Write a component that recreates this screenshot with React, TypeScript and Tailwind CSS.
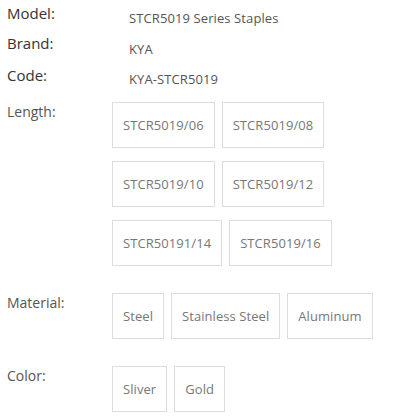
import React from 'react';

interface Spec {
  label: string;
  value: string;
  height: string;
  pad: string;
}

const specs: Spec[] = [
  { label: 'Model:', value: 'STCR5019 Series Staples', height: 'h-[30px]', pad: 'pt-[5px]' },
  { label: 'Brand:', value: 'KYA', height: 'h-[32px]', pad: 'pt-[6px]' },
  { label: 'Code:', value: 'KYA-STCR5019', height: 'h-[37px]', pad: 'pt-[4px]' },
];

interface OptionGroup {
  label: string;
  options: string[];
}

const groups: OptionGroup[] = [
  {
    label: 'Length:',
    options: ['STCR5019/06', 'STCR5019/08', 'STCR5019/10', 'STCR5019/12', 'STCR50191/14', 'STCR5019/16'],
  },
  { label: 'Material:', options: ['Steel', 'Stainless Steel', 'Aluminum'] },
  { label: 'Color:', options: ['Sliver', 'Gold'] },
];

const App: React.FC = () => {
  return (
    <div className="w-[417px] h-[420px] bg-white pl-[7px] pt-[3px] font-['Open_Sans',sans-serif] overflow-hidden">
      {specs.map((s) => (
        <div key={s.label} className={`flex items-start ${s.height}`}>
          <span className="w-[122px] shrink-0 text-[15px] leading-5 text-[#333]">{s.label}</span>
          <span className={`text-[13px] leading-5 text-[#555] tracking-[0.1px] ${s.pad}`}>{s.value}</span>
        </div>
      ))}

      <div className="flex flex-col gap-[27px]">
        {groups.map((g) => (
          <div key={g.label} className="flex items-start">
            <span className="w-[105px] shrink-0 text-[14px] leading-5 text-[#555]">{g.label}</span>
            <div className="flex flex-wrap gap-x-[7px] gap-y-[13px] w-[300px]">
              {g.options.map((o) => (
                <div
                  key={o}
                  className="h-[46px] px-[10px] flex items-center border border-[#ddd] text-[13px] leading-5 text-[#777] tracking-[0.07px] whitespace-nowrap"
                >
                  {o}
                </div>
              ))}
            </div>
          </div>
        ))}
      </div>
    </div>
  );
};

export default App;
